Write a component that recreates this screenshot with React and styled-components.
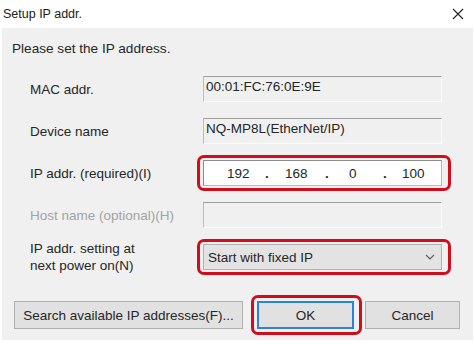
import styled, { createGlobalStyle } from 'styled-components';

const GlobalStyle = createGlobalStyle`
  html, body {
    margin: 0;
    padding: 0;
    background: #ffffff;
  }
  body {
    font-family: "Liberation Sans", Arial, sans-serif;
    color: #262626;
  }
`;

const RED = '#d10d1c';

const Window = styled.div`
  width: 474px;
  height: 345px;
  background: #ffffff;
  display: flex;
  flex-direction: column;
`;

const TitleBar = styled.div`
  height: 28px;
  display: flex;
  align-items: center;
  justify-content: space-between;
  padding: 0 9px 0 3px;
`;

const Title = styled.span`
  font-size: 12.5px;
  color: #202020;
`;

const CloseButton = styled.div`
  width: 14px;
  height: 14px;
  display: flex;
  align-items: center;
  justify-content: center;
`;

const Body = styled.div`
  margin: 0 1px 0 2px;
  background: #f0f0f0;
  padding: 13px 10px 5px 10px;
  display: flex;
  flex-direction: column;
`;

const Prompt = styled.div`
  font-size: 13.6px;
  line-height: 16px;
`;

const Form = styled.div`
  margin-top: 14px;
  padding-left: 18px;
  display: flex;
  flex-direction: column;
  gap: 6px;
`;

const Row = styled.div`
  display: grid;
  grid-template-columns: 167px 254px;
  height: 36px;
  align-items: center;
`;

const Label = styled.div`
  font-size: 13.5px;
  line-height: 17px;
  color: ${({ disabled }) => (disabled ? '#a3a3a3' : '#262626')};
`;

const Highlight = styled.div`
  height: 36px;
  box-sizing: border-box;
  border: 3px solid ${({ on }) => (on ? RED : 'transparent')};
  border-radius: 7px;
  padding: 2px 6px 2px 3px;
  display: flex;
  align-items: stretch;
`;

const ReadOnlyBox = styled.div`
  flex: 1;
  box-sizing: border-box;
  background: #f0f0f0;
  border: 1px solid #dedede;
  border-top-color: #9c9c9c;
  border-left-color: #bdbdbd;
  border-right-color: #fafafa;
  border-bottom-color: #fafafa;
  font-size: 13.5px;
  line-height: 16px;
  padding: 2px 2px 0;
  color: ${({ disabled }) => (disabled ? '#a3a3a3' : '#262626')};
`;

const IpBox = styled.div`
  flex: 1;
  box-sizing: border-box;
  background: #ffffff;
  border: 1px solid #8c8c8c;
  border-right-color: #b8b8b8;
  border-bottom-color: #b8b8b8;
  display: grid;
  grid-template-columns: 38px 20px 40px 24px 34px 19px 1fr;
  align-items: center;
  padding-left: 23px;
  font-size: 13.5px;
`;

const Octet = styled.span``;

const Dot = styled.span`
  font-weight: bold;
`;

const SelectBox = styled.div`
  flex: 1;
  box-sizing: border-box;
  background: #e3e3e3;
  border: 1px solid #b3b3b3;
  display: flex;
  align-items: center;
  justify-content: space-between;
  padding: 0 6px 0 4px;
  font-size: 13.5px;
`;

const ButtonRow = styled.div`
  margin-top: 20px;
  padding-left: 2px;
  display: flex;
  align-items: center;
  height: 40px;
`;

const Button = styled.div`
  box-sizing: border-box;
  width: ${({ w }) => w}px;
  height: 28px;
  background: #e1e1e1;
  border: ${({ primary }) => (primary ? '2px solid #2a83d8' : '1px solid #b0b0b0')};
  display: flex;
  align-items: center;
  justify-content: center;
  font-size: 13.5px;
  color: #262626;
  white-space: nowrap;
  margin-left: ${({ gap }) => gap || 0}px;
`;

const ButtonHighlight = styled.div`
  box-sizing: border-box;
  height: 40px;
  border: 3px solid ${RED};
  border-radius: 7px;
  padding: 3px 5px 3px 3px;
  margin-left: 8px;
  display: flex;
  align-items: center;
`;

const Chevron = () => (
  <svg width="10" height="6" viewBox="0 0 10 6">
    <path d="M1 1 L5 5 L9 1" fill="none" stroke="#606060" strokeWidth="1.2" />
  </svg>
);

const CloseIcon = () => (
  <svg width="12" height="12" viewBox="0 0 12 12">
    <path d="M1 1 L11 11 M11 1 L1 11" stroke="#202020" strokeWidth="1.1" />
  </svg>
);

const App = () => {
  return (
    <>
      <GlobalStyle />
      <Window>
        <TitleBar>
          <Title>Setup IP addr.</Title>
          <CloseButton>
            <CloseIcon />
          </CloseButton>
        </TitleBar>
        <Body>
          <Prompt>Please set the IP address.</Prompt>
          <Form>
            <Row>
              <Label>MAC addr.</Label>
              <Highlight>
                <ReadOnlyBox>00:01:FC:76:0E:9E</ReadOnlyBox>
              </Highlight>
            </Row>
            <Row>
              <Label>Device name</Label>
              <Highlight>
                <ReadOnlyBox>NQ-MP8L(EtherNet/IP)</ReadOnlyBox>
              </Highlight>
            </Row>
            <Row>
              <Label>IP addr. (required)(I)</Label>
              <Highlight on>
                <IpBox>
                  <Octet>192</Octet>
                  <Dot>.</Dot>
                  <Octet>168</Octet>
                  <Dot>.</Dot>
                  <Octet>0</Octet>
                  <Dot>.</Dot>
                  <Octet>100</Octet>
                </IpBox>
              </Highlight>
            </Row>
            <Row>
              <Label disabled>Host name (optional)(H)</Label>
              <Highlight>
                <ReadOnlyBox disabled />
              </Highlight>
            </Row>
            <Row>
              <Label>
                IP addr. setting at
                <br />
                next power on(N)
              </Label>
              <Highlight on>
                <SelectBox>
                  <span>Start with fixed IP</span>
                  <Chevron />
                </SelectBox>
              </Highlight>
            </Row>
          </Form>
          <ButtonRow>
            <Button w={229}>Search available IP addresses(F)...</Button>
            <ButtonHighlight>
              <Button w={97} primary>
                OK
              </Button>
            </ButtonHighlight>
            <Button w={95} gap={3}>
              Cancel
            </Button>
          </ButtonRow>
        </Body>
      </Window>
    </>
  );
};

export default App;
